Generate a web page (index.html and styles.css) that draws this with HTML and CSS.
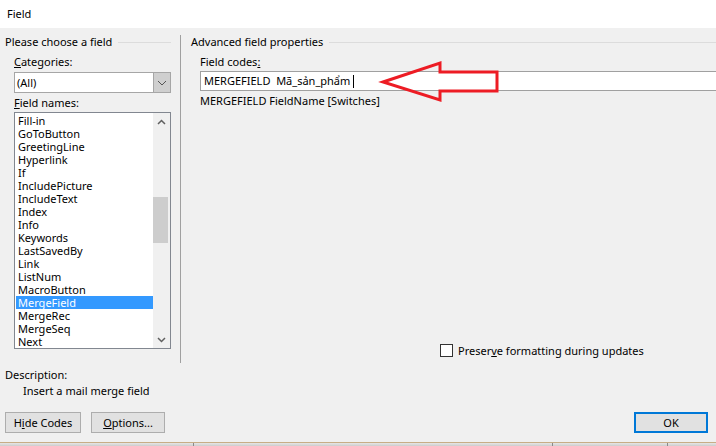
FILE: index.html
```html
<!DOCTYPE html>
<html>
<head>
<meta charset="utf-8">
<link rel="stylesheet" href="styles.css">
</head>
<body>
<div class="dialog">
  <div class="titlebar">Field</div>
  <div class="main">
    <div class="columns">
      <div class="left">
        <div class="group-title"><span>Please choose a field</span><i class="rule"></i></div>
        <div class="left-body">
          <div class="lbl"><u>C</u>ategories:</div>
          <div class="combo">
            <span class="combo-val">(All)</span>
            <span class="combo-btn"><svg width="10" height="6" viewBox="0 0 10 6"><path d="M1 1 L5 5 L9 1" fill="none" stroke="#555" stroke-width="1"/></svg></span>
          </div>
          <div class="lbl lbl-names"><u>F</u>ield names:</div>
          <div class="listbox">
            <ul class="items">
              <li>Fill-in</li>
              <li>GoToButton</li>
              <li>GreetingLine</li>
              <li>Hyperlink</li>
              <li>If</li>
              <li>IncludePicture</li>
              <li>IncludeText</li>
              <li>Index</li>
              <li>Info</li>
              <li>Keywords</li>
              <li>LastSavedBy</li>
              <li>Link</li>
              <li>ListNum</li>
              <li>MacroButton</li>
              <li class="sel">MergeField</li>
              <li>MergeRec</li>
              <li>MergeSeq</li>
              <li>Next</li>
            </ul>
            <div class="vscroll">
              <span class="sb-btn"><svg width="9" height="6" viewBox="0 0 9 6"><path d="M1 5 L4.5 1.5 L8 5" fill="none" stroke="#606060" stroke-width="1.5"/></svg></span>
              <span class="thumb"></span>
              <span class="sb-btn sb-down"><svg width="9" height="6" viewBox="0 0 9 6"><path d="M1 1 L4.5 4.5 L8 1" fill="none" stroke="#606060" stroke-width="1.5"/></svg></span>
            </div>
          </div>
        </div>
      </div>
      <div class="divider"></div>
      <div class="right">
        <div class="group-title"><span>Advanced field properties</span><i class="rule"></i></div>
        <div class="right-body">
          <div class="lbl">Field codes<u>:</u></div>
          <div class="codes">MERGEFIELD  Mã_sản_phẩm <span class="caret"></span></div>
          <div class="hint">MERGEFIELD FieldName [Switches]</div>
          <div class="check-row"><span class="checkbox"></span><span>Preser<u>v</u>e formatting during updates</span></div>
        </div>
      </div>
    </div>
    <div class="desc">
      <div>Description:</div>
      <div class="desc-text">Insert a mail merge field</div>
    </div>
    <div class="buttons">
      <button class="btn btn-hide">H<u>i</u>de Codes</button>
      <button class="btn btn-opt"><u>O</u>ptions...</button>
      <button class="btn btn-ok">OK</button>
    </div>
  </div>
  <div class="taskbar"><span class="seg s1"></span><span class="seg s2"></span><span class="seg s3"></span><span class="seg s4"></span></div>
  <svg class="arrow" width="716" height="446" viewBox="0 0 716 446"><polygon points="383,82 440,63 440,72 497,72 497,91 440,91 440,100" fill="none" stroke="#ed1c24" stroke-width="3" stroke-linejoin="miter"/></svg>
</div>
</body>
</html>
```
FILE: styles.css
```css
* { box-sizing: border-box; }
html, body { margin: 0; padding: 0; }
body {
  width: 716px;
  height: 446px;
  overflow: hidden;
  background: #f0f0f0;
  font-family: "Noto Sans", "Open Sans", sans-serif;
  font-size: 11px;
  color: #000;
}
.dialog {
  position: relative;
  display: flex;
  flex-direction: column;
  height: 446px;
}
.titlebar {
  height: 28px;
  background: #fff;
  padding: 0 0 2px 7px;
  display: flex;
  align-items: center;
}
.main {
  flex: 1;
  display: flex;
  flex-direction: column;
}
.columns {
  display: flex;
  height: 335px;
}
.left {
  width: 180px;
  padding: 6px 9px 0 5px;
}
.group-title {
  display: flex;
  align-items: center;
  height: 16px;
  line-height: 16px;
  white-space: nowrap;
}
.rule {
  flex: 1;
  height: 1px;
  background: #dcdcdc;
  margin-left: 6px;
}
.left-body { padding-left: 9px; }
.lbl {
  height: 16px;
  line-height: 16px;
  margin-top: 4px;
}
.lbl-names { margin-top: 2px; }
.combo {
  margin-top: 2px;
  height: 21px;
  border: 1px solid #a6a6a6;
  background: #fff;
  display: flex;
}
.combo-val {
  flex: 1;
  padding-left: 2px;
  line-height: 19px;
}
.combo-btn {
  width: 17px;
  background: #cfcfcf;
  border-left: 1px solid #a6a6a6;
  display: flex;
  align-items: center;
  justify-content: center;
}
.listbox {
  margin-top: 1px;
  height: 237px;
  border: 1px solid #828790;
  background: #fff;
  display: flex;
}
.items {
  flex: 1;
  list-style: none;
  margin: 0;
  padding: 1px 0 0 1px;
}
.items li {
  height: 13px;
  line-height: 13px;
  padding-left: 2px;
  white-space: nowrap;
}
.items li.sel {
  background: #3399ff;
  color: #fff;
}
.vscroll {
  width: 17px;
  background: #f0f0f0;
  display: flex;
  flex-direction: column;
}
.sb-btn {
  height: 17px;
  display: flex;
  align-items: center;
  justify-content: center;
}
.sb-down { margin-top: auto; }
.thumb {
  width: 15px;
  height: 46px;
  margin-top: 67px;
  background: #cdcdcd;
}
.divider {
  width: 1px;
  background: #a0a0a0;
  margin-top: 7px;
}
.right {
  flex: 1;
  padding: 6px 0 0 10px;
  display: flex;
  flex-direction: column;
}
.right-body {
  flex: 1;
  padding-left: 9px;
  display: flex;
  flex-direction: column;
}
.codes {
  margin-top: 1px;
  margin-right: -2px;
  height: 20px;
  border: 1px solid #a0a0a0;
  background: #fff;
  padding-left: 3px;
  line-height: 18px;
  white-space: pre;
  display: flex;
  align-items: center;
}
.caret {
  display: inline-block;
  width: 1px;
  height: 13px;
  background: #000;
}
.hint {
  margin-top: 2px;
  height: 16px;
  line-height: 16px;
}
.check-row {
  margin-top: auto;
  margin-left: 240px;
  margin-bottom: 5px;
  height: 16px;
  display: flex;
  align-items: center;
  gap: 5px;
}
.checkbox {
  width: 13px;
  height: 13px;
  border: 1px solid #333;
  background: #fff;
}
.desc {
  margin-top: 4px;
  padding-left: 5px;
  line-height: 16px;
}
.desc-text { padding-left: 18px; }
.buttons {
  margin-top: 13px;
  display: flex;
  padding: 0 8px 0 5px;
}
.btn {
  height: 21px;
  font: inherit;
  color: #000;
  background: #e1e1e1;
  border: 1px solid #adadad;
  padding: 0;
}
.btn-hide { width: 76px; }
.btn-opt { width: 74px; margin-left: 10px; }
.btn-ok {
  width: 74px;
  margin-left: auto;
  border: 2px solid #0078d7;
}
.taskbar {
  height: 4px;
  border-top: 1px solid #c8ad86;
  background: linear-gradient(#e6e6e6, #cdcdcd);
  display: flex;
}
.seg { border-right: 1px solid #8a8a8a; }
.s1 { width: 194px; }
.s2 { width: 359px; }
.s3 { width: 115px; }
.s4 { flex: 1; border-right: none; }
.arrow {
  position: absolute;
  left: 0;
  top: 0;
  pointer-events: none;
}
```
